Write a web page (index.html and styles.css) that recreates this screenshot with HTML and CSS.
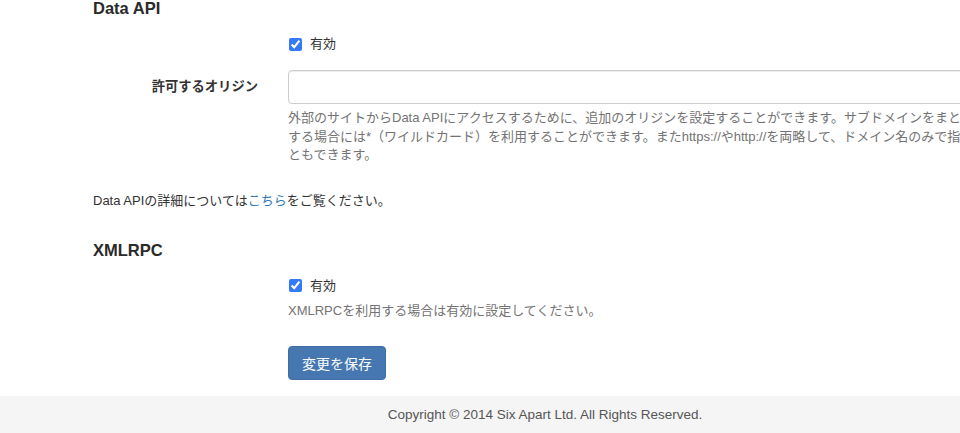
FILE: index.html
```html
<!DOCTYPE html>
<html lang="ja">
<head>
<meta charset="utf-8">
<title>Data API / XMLRPC 設定</title>
<link rel="stylesheet" href="styles.css">
</head>
<body>
<main class="page">
  <section class="section">
    <h2 class="section-title">Data API</h2>
    <div class="form-row">
      <div class="form-label"></div>
      <div class="form-control-col">
        <label class="check"><input type="checkbox" checked> <span>有効</span></label>
      </div>
    </div>
    <div class="form-row form-row-origin">
      <label class="form-label" for="origin">許可するオリジン</label>
      <div class="form-control-col">
        <input id="origin" class="text-input" type="text">
        <p class="help">外部のサイトからData APIにアクセスするために、追加のオリジンを設定することができます。サブドメインをまとめて指定する場合には*（ワイルドカード）を利用することができます。またhttps://やhttp://を両略して、ドメイン名のみで指定することもできます。</p>
      </div>
    </div>
    <p class="note">Data APIの詳細については<a href="#">こちら</a>をご覧ください。</p>
  </section>

  <section class="section">
    <h2 class="section-title section-title-xml">XMLRPC</h2>
    <div class="form-row">
      <div class="form-label"></div>
      <div class="form-control-col">
        <label class="check"><input type="checkbox" checked> <span>有効</span></label>
        <p class="help help-single">XMLRPCを利用する場合は有効に設定してください。</p>
      </div>
    </div>
    <div class="form-row form-row-actions">
      <div class="form-label"></div>
      <div class="form-control-col">
        <button class="btn-primary" type="submit">変更を保存</button>
      </div>
    </div>
  </section>
</main>
<footer class="footer">Copyright © 2014 Six Apart Ltd. All Rights Reserved.</footer>
</body>
</html>
```
FILE: styles.css
```css
html, body {
  margin: 0;
  padding: 0;
}
body {
  width: 1090px;
  font-family: "Liberation Sans", "Noto Sans CJK JP", sans-serif;
  font-size: 14px;
  line-height: 20px;
  color: #333;
  background: #fff;
}
.page {
  padding-left: 93px;
}
.section-title {
  margin: -2px 0 0;
  font-size: 16.5px;
  line-height: 20px;
  font-weight: bold;
  color: #2a2a2a;
}
.section-title-xml {
  margin-top: 29px;
}
.form-row {
  display: grid;
  grid-template-columns: 165px 725px;
  column-gap: 30px;
  margin-top: 16px;
}
.form-label {
  text-align: right;
  font-weight: bold;
  font-size: 13.3px;
  line-height: 34px;
  color: #333;
}
.check {
  display: flex;
  align-items: center;
  height: 20px;
  font-size: 13px;
}
.check input {
  width: 13px;
  height: 13px;
  margin: 0 8px 0 1px;
  accent-color: #3579f6;
}
.text-input {
  display: block;
  box-sizing: border-box;
  width: 100%;
  height: 34px;
  margin: 0;
  border: 1px solid #ccc;
  border-radius: 4px;
  box-shadow: inset 0 1px 1px rgba(0, 0, 0, 0.075);
  background: #fff;
}
.help {
  margin: 5px 0 0;
  font-size: 13px;
  line-height: 18.5px;
  color: #737373;
}
.help-single {
  margin-top: 6px;
}
.note {
  margin: 26px 0 0;
  font-size: 13px;
  line-height: 20px;
  color: #333;
}
.note a {
  color: #337ab7;
  text-decoration: none;
}
.form-row-actions {
  margin-top: 26px;
}
.btn-primary {
  box-sizing: border-box;
  height: 34px;
  padding: 0 13px;
  font-family: inherit;
  font-size: 14px;
  color: #fff;
  background: #4677b1;
  border: 1px solid #3f6da5;
  border-radius: 4px;
}
.footer {
  margin-top: 16px;
  padding: 10px 0 10px;
  background: #f5f5f5;
  text-align: center;
  font-size: 13.5px;
  line-height: 18px;
  color: #555;
}
```
